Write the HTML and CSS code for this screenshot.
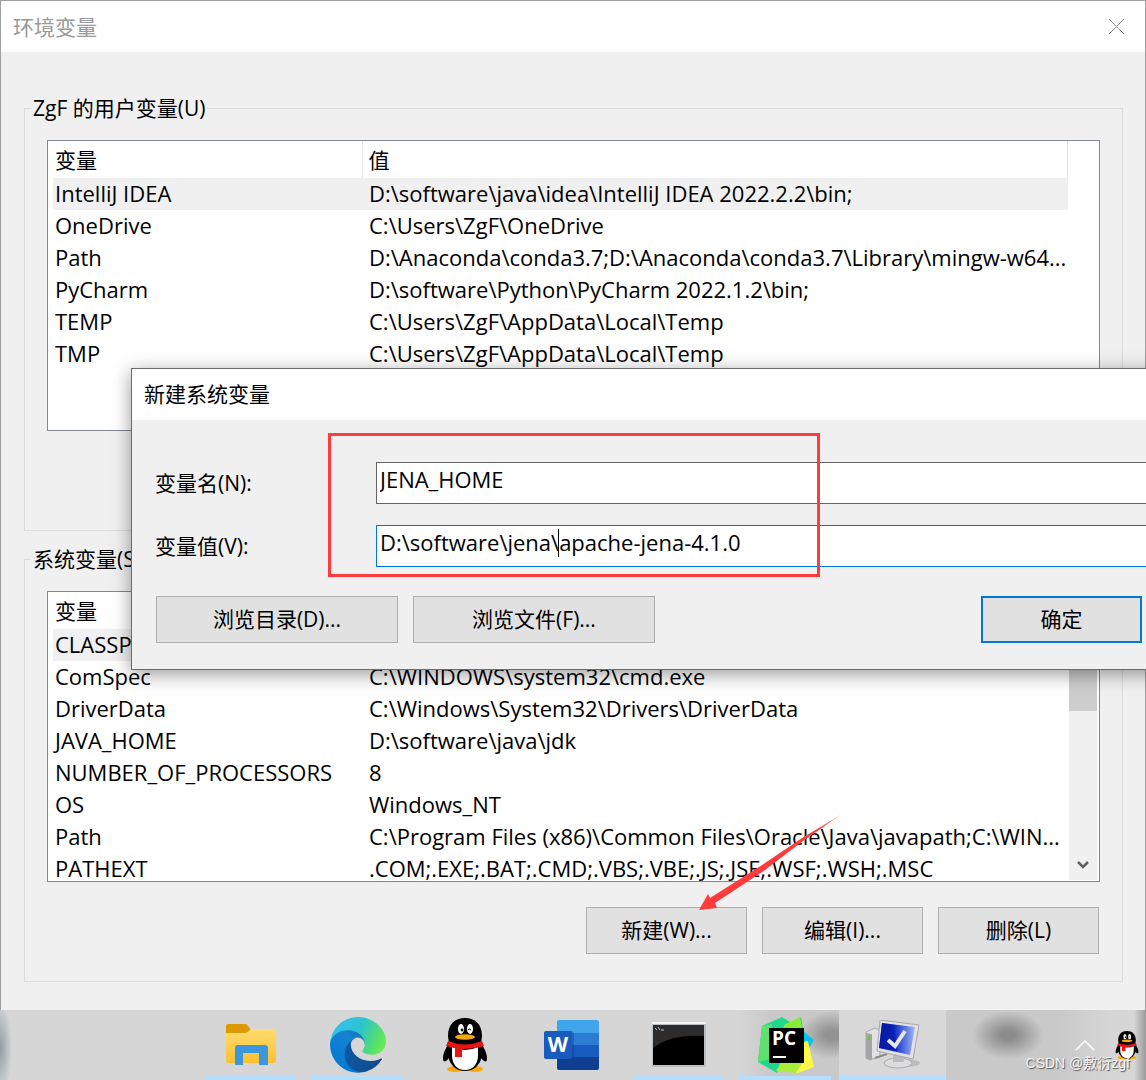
FILE: index.html
```
<!DOCTYPE html>
<html lang="zh-CN">
<head>
    <meta charset="UTF-8">
    <meta name="viewport" content="width=device-width, initial-scale=1.0">
    <title>环境变量</title>
    <link rel="stylesheet" href="styles.css">
</head>
<body>
    <div class="desktop">
        <main class="window">
            <header class="title-bar">
                <h1>环境变量</h1>
                <button class="close-btn" type="button" aria-label="关闭">
                    <svg width="17" height="17" viewBox="0 0 17 17"><path d="M1 1l15 15M16 1L1 16" stroke="#888" fill="none"/></svg>
                </button>
            </header>

            <div class="window-body">
                <!-- User variables -->
                <fieldset class="group user-group">
                    <legend>ZgF 的用户变量(U)</legend>
                    <div class="list">
                        <table>
                            <thead>
                                <tr><th>变量</th><th>值</th></tr>
                            </thead>
                            <tbody>
                                <tr class="selected"><td>IntelliJ IDEA</td><td>D:\software\java\idea\IntelliJ IDEA 2022.2.2\bin;</td></tr>
                                <tr><td>OneDrive</td><td>C:\Users\ZgF\OneDrive</td></tr>
                                <tr><td>Path</td><td>D:\Anaconda\conda3.7;D:\Anaconda\conda3.7\Library\mingw-w64...</td></tr>
                                <tr><td>PyCharm</td><td>D:\software\Python\PyCharm 2022.1.2\bin;</td></tr>
                                <tr><td>TEMP</td><td>C:\Users\ZgF\AppData\Local\Temp</td></tr>
                                <tr><td>TMP</td><td>C:\Users\ZgF\AppData\Local\Temp</td></tr>
                            </tbody>
                        </table>
                        <div class="rail"></div>
                    </div>
                </fieldset>

                <!-- System variables -->
                <fieldset class="group">
                    <legend>系统变量(S)</legend>
                    <div class="list">
                        <table>
                            <thead>
                                <tr><th>变量</th><th></th></tr>
                            </thead>
                            <tbody>
                                <tr class="selected"><td>CLASSPATH</td><td></td></tr>
                                <tr><td>ComSpec</td><td>C:\WINDOWS\system32\cmd.exe</td></tr>
                                <tr><td>DriverData</td><td>C:\Windows\System32\Drivers\DriverData</td></tr>
                                <tr><td>JAVA_HOME</td><td>D:\software\java\jdk</td></tr>
                                <tr><td>NUMBER_OF_PROCESSORS</td><td>8</td></tr>
                                <tr><td>OS</td><td>Windows_NT</td></tr>
                                <tr><td>Path</td><td>C:\Program Files (x86)\Common Files\Oracle\Java\javapath;C:\WIN...</td></tr>
                                <tr><td>PATHEXT</td><td>.COM;.EXE;.BAT;.CMD;.VBS;.VBE;.JS;.JSE;.WSF;.WSH;.MSC</td></tr>
                            </tbody>
                        </table>
                        <div class="rail scrollbar">
                            <div class="thumb"></div>
                            <svg width="12" height="10" viewBox="0 0 12 10"><path d="M1 2l5 5 5-5" stroke="#606060" stroke-width="2.6" fill="none"/></svg>
                        </div>
                    </div>
                    <div class="actions">
                        <button type="button">新建(W)...</button>
                        <button type="button">编辑(I)...</button>
                        <button type="button">删除(L)</button>
                    </div>
                </fieldset>
            </div>
        </main>

        <footer class="taskbar">
            <nav class="apps">
                <a href="#" class="app running" aria-label="文件资源管理器">
                    <svg width="50" height="44" viewBox="0 0 50 44">
                        <defs>
                            <linearGradient id="folder" x1="0" y1="0" x2="0" y2="1"><stop offset="0" stop-color="#ffdc6e"/><stop offset="1" stop-color="#fbc02f"/></linearGradient>
                        </defs>
                        <path d="M0 3q0-2 2-2h17q2 0 3 2l3 4v12H0z" fill="#dd9a00"/>
                        <path d="M0 10h19q2 0 4-2l2-2h22q3 0 3 3v29q0 2-2 2H2q-2 0-2-2z" fill="url(#folder)"/>
                        <path d="M9 42V25q0-3 3-3h27q3 0 3 3v17h-9V30H17v12z" fill="#3a96dd"/>
                    </svg>
                </a>
                <a href="#" class="app running" aria-label="Edge">
                    <svg width="56" height="56" viewBox="0 0 256 256">
                        <defs>
                            <linearGradient id="edgeNavy" x1="0" x2="1"><stop offset="0" stop-color="#0c59a4"/><stop offset="1" stop-color="#114a8b"/></linearGradient>
                            <linearGradient id="edgeBlue" x1="1" y1="0" x2="0.2" y2="1"><stop offset="0" stop-color="#1b5fa5"/><stop offset=".35" stop-color="#1683d0"/><stop offset="1" stop-color="#0078d7"/></linearGradient>
                            <linearGradient id="edgeGreen" x1="0" y1=".3" x2="1" y2=".6"><stop offset="0" stop-color="#35c1f1"/><stop offset=".5" stop-color="#2cc3cf"/><stop offset=".8" stop-color="#50dc7a"/><stop offset="1" stop-color="#66eb4e"/></linearGradient>
                        </defs>
                        <path d="M232 190a94 94 0 0 1-11 5 102 102 0 0 1-36 6c-48 0-90-33-90-75a32 32 0 0 1 17-28c-43 2-54 47-54 73 0 75 68 82 83 82 8 0 20-2 28-5a128 128 0 0 0 67-53 3 3 0 0 0-4-5z" fill="url(#edgeNavy)"/>
                        <path d="M106 241a79 79 0 0 1-23-21A81 81 0 0 1 113 98c3-1 8-4 15-4a32 32 0 0 1 25 13 32 32 0 0 1 6 19c0-1 25-80-80-80C35 46 0 88 0 125a130 130 0 0 0 12 56 128 128 0 0 0 156 67 75 75 0 0 1-62-7z" fill="url(#edgeBlue)"/>
                        <path d="M152 149c-1 1-3 2-3 6 0 3 2 6 5 8 14 10 41 9 41 9a59 59 0 0 0 30-8 61 61 0 0 0 31-53c0-22-8-37-11-43C224 28 178 0 128 0A128 128 0 0 0 0 126c1-37 37-66 80-66 4 0 24 0 42 10 16 8 24 18 30 28 6 11 7 24 7 29s-3 13-7 22z" fill="url(#edgeGreen)"/>
                    </svg>
                </a>
                <a href="#" class="app" aria-label="QQ">
                    <svg width="46" height="54" viewBox="0 0 46 54">
                        <g id="penguin">
                            <ellipse cx="13" cy="51" rx="8" ry="3" fill="#f9a80b"/>
                            <ellipse cx="33" cy="51" rx="8" ry="3" fill="#f9a80b"/>
                            <path d="M7 25Q1 34 1 40q0 7 6 0zM39 25q6 9 6 15 0 7-6 0z" fill="#000"/>
                            <path d="M6 18C6 6 13 0 23 0s17 6 17 18l-1 8q2 7 1 12c-2 9-8 15-17 15S8 47 6 38q-1-5 1-12z" fill="#000"/>
                            <path d="M10 29q13 6 26 0v8c0 9-5 15-13 15s-13-6-13-15z" fill="#fff"/>
                            <ellipse cx="19" cy="11" rx="3" ry="5" fill="#fff"/>
                            <ellipse cx="28" cy="11" rx="3" ry="5" fill="#fff"/>
                            <circle cx="20" cy="12" r="1.4"/>
                            <path d="M26 12q1-2 3 0" stroke="#000" fill="none"/>
                            <ellipse cx="23" cy="19" rx="10" ry="2.8" fill="#f9a80b"/>
                            <path d="M6 23q17 7 34 0l2 5q-9 3-22 3v8h-7v-9l-9-2z" fill="#e61414"/>
                        </g>
                    </svg>
                </a>
                <a href="#" class="app" aria-label="Word">
                    <svg width="56" height="50" viewBox="0 0 56 50">
                        <path d="M13 2q0-2 2-2h38q2 0 2 2v11H13z" fill="#41a5ee"/>
                        <path d="M13 13h42v12H13z" fill="#2b7cd3"/>
                        <path d="M13 25h42v12H13z" fill="#185abd"/>
                        <path d="M13 37h42v11q0 2-2 2H15q-2 0-2-2z" fill="#103f91"/>
                        <path d="M13 11h14q3 0 3 3v24q0 2-3 2H13z" fill="#123b7a" opacity=".35"/>
                        <rect y="11" width="28" height="28" rx="2" fill="#185abd"/>
                        <text x="14" y="32" text-anchor="middle" class="word-mark">W</text>
                    </svg>
                </a>
                <a href="#" class="app running" aria-label="命令提示符">
                    <svg width="56" height="46" viewBox="0 0 56 46">
                        <rect x="1" width="54" height="45" rx="1" fill="#b9bec3"/>
                        <rect x="1" width="54" height="2" fill="#f4f4f4"/>
                        <rect x="2" y="3" width="51" height="40"/>
                        <path d="M2 3h51v11Q20 12 2 26z" fill="#2c2c2c"/>
                        <path d="M4 6l2 2M7 5l2 3M10 8h3" stroke="#bbb" fill="none"/>
                    </svg>
                </a>
                <a href="#" class="app running" aria-label="PyCharm">
                    <svg width="56" height="56" viewBox="0 0 56 56">
                        <path d="M4 9L24 0l13 8 6-8 2 12-20 30-6 14L0 45z" fill="#21d789"/>
                        <path d="M4 9l10-2-3 35-11 3z" fill="#5fe06f"/>
                        <path d="M26 8L42 0l3 17-20-5z" fill="#87ec35"/>
                        <path d="M45 14l11 9-6 10-8-8z" fill="#07c3f2"/>
                        <path d="M45 25l5-1 6 26-16 6-22-3 10-9z" fill="#fcf84a"/>
                        <path d="M22 46h22l-6 10-19-2z" fill="#a9ed3f"/>
                        <rect x="11" y="11" width="35" height="35"/>
                        <path d="M15 39h13v2H15z" fill="#fff"/>
                        <text x="14" y="28" class="pc-mark">PC</text>
                    </svg>
                </a>
                <a href="#" class="app running active" aria-label="系统属性">
                    <svg width="56" height="50" viewBox="0 0 56 50">
                        <defs>
                            <linearGradient id="screen"><stop offset="0" stop-color="#0719a8"/><stop offset=".45" stop-color="#1431d2"/><stop offset="1" stop-color="#9db8ee"/></linearGradient>
                        </defs>
                        <ellipse cx="40" cy="43" rx="15" ry="4" fill="#aaa" opacity=".6"/>
                        <path d="M1 12l9-4 5 2v26L5 40l-4-2z" fill="#e2e2e3" stroke="#aaa"/>
                        <path d="M1 13l6 1v25l-3 1-3-2z" fill="#a3a4a7"/>
                        <path d="M3 16h2v4H3z" fill="#56d41c"/>
                        <path d="M10 38l12-4" stroke="#888" stroke-width="2"/>
                        <ellipse cx="33" cy="43" rx="14" ry="5" fill="#dcdcde" stroke="#aaa"/>
                        <path d="M28 32h10l1 10H28z" fill="#bbb"/>
                        <path d="M15 0l39 5-6 34-36-8z" fill="#e2e2e4" stroke="#a8a8aa"/>
                        <path d="M17 3l33 4-5 28-31-7z" fill="url(#screen)"/>
                        <path d="M17 3l12 2 3 26-18-3z" fill="#0517a0" opacity=".6"/>
                        <path d="M23 20l7 6L40 11" stroke="#e6e6e6" stroke-width="4" fill="none"/>
                    </svg>
                </a>
            </nav>
            <div class="tray">
                <svg width="20" height="12" viewBox="0 0 20 12"><path d="M1 11l9-9 9 9" stroke="#fff" stroke-width="1.5" fill="none"/></svg>
                <svg width="24" height="28" viewBox="0 0 46 54"><use href="#penguin"/></svg>
            </div>
            <span class="watermark">CSDN @敷衍zgf</span>
        </footer>

        <!-- New variable dialog, runs past the right side of the desktop -->
        <section class="dialog" role="dialog" aria-labelledby="dialogTitle">
            <h2 id="dialogTitle">新建系统变量</h2>
            <form class="dialog-form">
                <div class="field">
                    <label for="varName">变量名(N):</label>
                    <input type="text" id="varName" value="JENA_HOME">
                </div>
                <div class="field">
                    <label for="varValue">变量值(V):</label>
                    <input type="text" id="varValue" class="focused" value="D:\software\jena\apache-jena-4.1.0">
                    <span class="caret"></span>
                </div>
                <div class="dialog-actions">
                    <button type="button">浏览目录(D)...</button>
                    <button type="button">浏览文件(F)...</button>
                    <button type="button" class="ok-btn">确定</button>
                </div>
            </form>
        </section>

        <!-- Annotations -->
        <div class="highlight"></div>
        <svg class="arrow" width="144" height="98" viewBox="0 0 144 98">
            <defs>
                <linearGradient id="fade" x1="0" y1="1" x2="1" y2="0"><stop offset=".85" stop-color="#ff3b3b"/><stop offset="1" stop-color="#ff3b3b" stop-opacity=".3"/></linearGradient>
            </defs>
            <path d="M0 96L9 80l2 4L66 49l37-25L143 0 104 27 66 56 16 89l2 5z" fill="url(#fade)"/>
        </svg>
    </div>
</body>
</html>
```
FILE: styles.css
```
* {
    box-sizing: border-box;
}

body {
    margin: 0;
    font-family: "Open Sans", "Noto Sans CJK SC", sans-serif;
    font-size: 21px;
    line-height: 32px;
    color: #000;
    background-color: #f0f0f0;
}

.desktop {
    position: relative;
    display: flex;
    flex-direction: column;
    min-height: 100vh;
    overflow: hidden;
}

/* Main window */
.window {
    flex: 1;
    border: 1px solid #a0a0a0;
    border-bottom: none;
    background-color: #f0f0f0;
}

.title-bar {
    display: flex;
    align-items: center;
    justify-content: space-between;
    height: 51px;
    padding: 0 20px 0 12px;
    background-color: #fff;
}

h1,
h2 {
    margin: 0;
    font-size: 21px;
    font-weight: 400;
}

h1 {
    color: #999;
}

.close-btn {
    display: flex;
    padding: 0;
    border: none;
    background: none;
}

.window-body {
    padding: 40px 22px 28px 23px;
}

.group {
    min-width: 0;
    margin: 0;
    padding: 16px 22px 27px;
    border: 1px solid #dcdcdc;
}

.user-group {
    margin-bottom: 12px;
    padding-bottom: 99px;
}

legend {
    margin-left: -16px;
    padding: 0 2px;
}

.list {
    display: flex;
    align-items: flex-start;
    height: 291px;
    padding-left: 5px;
    overflow: hidden;
    border: 1px solid #828790;
    background-color: #fff;
}

table {
    flex: 1;
    min-width: 0;
    table-layout: fixed;
    border-collapse: collapse;
}

th,
td {
    height: 32px;
    padding: 0 0 0 2px;
    font-weight: 400;
    text-align: left;
    white-space: nowrap;
}

th {
    height: 37px;
    border-right: 1px solid #e5e5e5;
}

td {
    font-size: 22px;
    line-height: 30px;
    vertical-align: top;
}

th:first-child {
    width: 309px;
}

th + th {
    padding-left: 6px;
}

td + td {
    padding-left: 7px;
}

.selected {
    background-color: #f0f0f0;
}

.rail {
    flex: none;
    width: 31px;
}

.scrollbar {
    display: flex;
    flex-direction: column;
    align-items: center;
    justify-content: space-between;
    height: 288px;
    padding-bottom: 10px;
    border: solid #fff;
    border-width: 0 2px 0 1px;
    background-color: #f0f0f0;
}

.thumb {
    width: 100%;
    height: 119px;
    background-color: #cdcdcd;
}

button {
    font: inherit;
    color: inherit;
}

.actions button,
.dialog-actions button {
    height: 47px;
    padding: 0 0 2px;
    border: 1px solid #adadad;
    background-color: #e1e1e1;
}

.actions {
    display: flex;
    justify-content: flex-end;
    gap: 15px;
    margin-top: 25px;
    padding-right: 1px;
}

.actions button {
    width: 161px;
}

/* Dialog */
.dialog {
    position: absolute;
    top: 368px;
    left: 131px;
    right: -200px;
    border: 1px solid #6b6b6b;
    background-color: #f0f0f0;
    box-shadow: 0 4px 18px rgba(0, 0, 0, 0.4);
}

.dialog h2 {
    padding: 9px 12px 10px;
    background-color: #fff;
}

.dialog-form {
    padding: 42px 24px 26px 23px;
}

.field {
    position: relative;
    display: flex;
    align-items: center;
    margin-bottom: 21px;
}

.field label {
    width: 221px;
}

.field input {
    flex: 1;
    min-width: 0;
    height: 42px;
    padding: 0 3px 8px;
    border: 1px solid #646464;
    border-radius: 0;
    outline: none;
    font: inherit;
    font-size: 22px;
    background-color: #fff;
}

.field .focused {
    border-color: #0078d7;
}

.caret {
    position: absolute;
    top: 4px;
    left: 403px;
    width: 1px;
    height: 28px;
    background-color: #000;
}

.dialog-actions {
    display: flex;
    gap: 15px;
    padding: 8px 0 0 1px;
}

.dialog-actions button {
    width: 242px;
}

.dialog-actions .ok-btn {
    width: 161px;
    margin: 0 179px 0 auto;
    border: 2px solid #0078d7;
}

/* Annotations */
.highlight {
    position: absolute;
    top: 433px;
    left: 328px;
    width: 492px;
    height: 144px;
    border: 3px solid #ff3b3b;
    pointer-events: none;
}

.arrow {
    position: absolute;
    top: 814px;
    left: 699px;
    pointer-events: none;
}

/* Taskbar */
.taskbar {
    position: relative;
    display: flex;
    justify-content: space-between;
    height: 70px;
    padding: 0 7px 0 197px;
    background:
        radial-gradient(ellipse 12px 45px at 0 38px, #8b9da3, transparent),
        linear-gradient(to left, #999, transparent 12px),
        radial-gradient(ellipse 36px 24px at 1008px 25px, #8c8c8c 20%, transparent),
        radial-gradient(ellipse 34px 24px at 832px 25px, #929292 20%, transparent),
        linear-gradient(to right, transparent 740px, #c9c9c9 770px, #c9c9c9 1060px, transparent 1110px),
        #d6d6d6;
}

.apps {
    display: flex;
}

.app {
    display: flex;
    align-items: center;
    justify-content: center;
    width: 107px;
    border: solid transparent;
    border-width: 4px 8px;
}

.running {
    background-image: linear-gradient(#b3e0ff, #b3e0ff);
    background-origin: border-box;
    background-position: center bottom;
    background-size: 91px 4px;
    background-repeat: no-repeat;
}

.active {
    background-color: #d8d8d8;
    background-size: 107px 4px;
}

.word-mark {
    font-size: 21px;
    font-weight: 700;
    fill: #fff;
}

.pc-mark {
    font-size: 19px;
    font-weight: 700;
    fill: #fff;
}

.tray {
    display: flex;
    align-items: center;
    gap: 20px;
}

.watermark {
    position: absolute;
    right: 16px;
    bottom: 6px;
    font-family: "Liberation Sans", "Noto Sans CJK SC", sans-serif;
    font-size: 14px;
    line-height: 22px;
    color: #f4f4f4;
    text-shadow: 1px 1px 1px #555;
}
```
